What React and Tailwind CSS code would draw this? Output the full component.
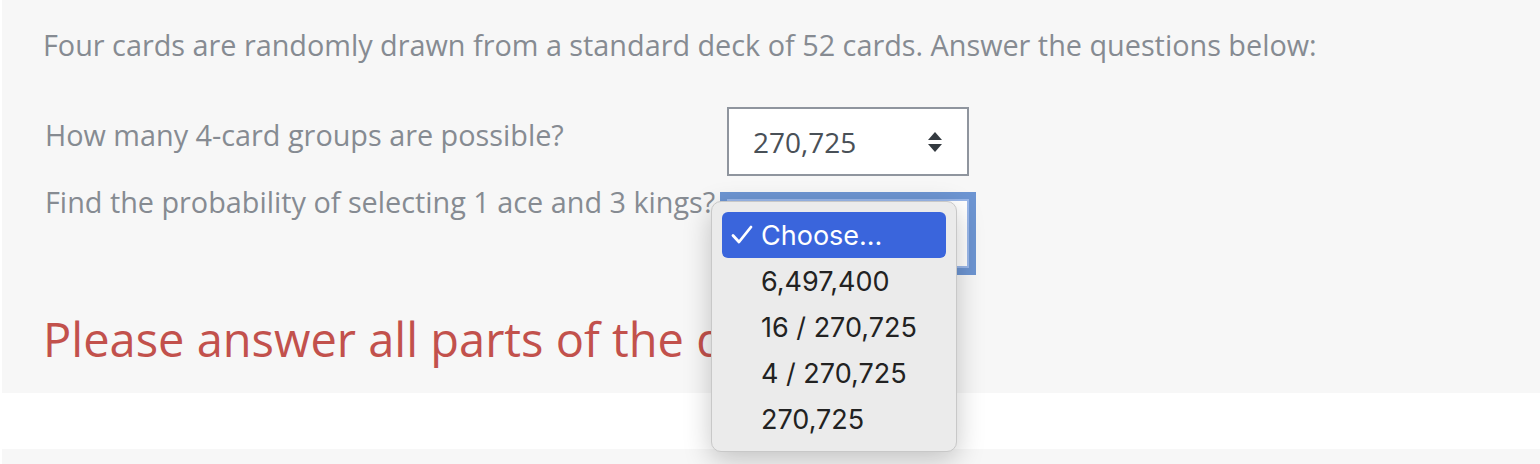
import React from "react";

const options = ["6,497,400", "16 / 270,725", "4 / 270,725", "270,725"];

const SortArrows = () => (
  <svg width="16" height="22" viewBox="0 0 16 22" className="text-[#343a40]">
    <path d="M8 1 L15 9 L1 9 Z" fill="currentColor" />
    <path d="M1 13 L15 13 L8 21 Z" fill="currentColor" />
  </svg>
);

const Check = () => (
  <svg width="22" height="20" viewBox="0 0 22 20" className="shrink-0">
    <path d="M2 10.5 L8 17 L20 2" fill="none" stroke="white" strokeWidth="2.8" strokeLinecap="round" strokeLinejoin="round" />
  </svg>
);

const App = () => {
  return (
    <div className="w-[1540px] h-[464px] bg-white overflow-hidden font-['Open_Sans',sans-serif]">
      {/* Question panel */}
      <div className="relative ml-[2px] h-[393px] bg-[#f7f7f7] pl-[41px]">
        <p className="pt-[24px] text-[28.8px] leading-[42px] text-[#868b92]">
          Four cards are randomly drawn from a standard deck of 52 cards. Answer the questions below:
        </p>

        {/* Row 1 */}
        <div className="mt-[41px] flex items-start">
          <div className="w-[684px] pl-[2px] pt-[7px] text-[28.8px] leading-[42px] text-[#868b92]">
            How many 4-card groups are possible?
          </div>
          <div className="w-[242px] h-[69px] border-2 border-[#8f959e] bg-white flex items-center justify-between pl-[24px] pr-[24px]">
            <span className="text-[28px] text-[#495057]">270,725</span>
            <SortArrows />
          </div>
        </div>

        {/* Row 2 */}
        <div className="mt-[23px] flex items-start">
          <div className="w-[684px] pl-[2px] -mt-[18px] h-[42px] whitespace-nowrap text-[28.8px] leading-[42px] text-[#868b92]">
            Find the probability of selecting 1 ace and 3 kings?
          </div>
          <div className="w-[242px] h-[69px] border-2 border-[#9bb8ea] bg-white shadow-[0_0_0_7px_#6d95d2]" />
        </div>

        <p className="mt-[43px] text-[47px] leading-[56px] text-[#c2514c] whitespace-nowrap">
          Please answer all parts of the question.
        </p>

        {/* Open dropdown menu */}
        <div className="absolute left-[709px] top-[201px] w-[246px] h-[251px] rounded-[10px] bg-[#ebebeb] border border-[#c8c8c8] shadow-[0_8px_28px_rgba(0,0,0,0.22)] px-[10px] pt-[10px] font-['Inter',sans-serif] text-[27px] leading-none">
          <div className="h-[46px] rounded-[6px] bg-[#3a65dc] flex items-center pl-[9px] gap-[8px] text-white">
            <Check />
            <span>Choose...</span>
          </div>
          {options.map((o) => (
            <div key={o} className="h-[46px] flex items-center pl-[39px] text-[#222222]">
              {o}
            </div>
          ))}
        </div>
      </div>

      <div className="h-[56px] bg-white" />
      <div className="ml-[2px] h-[15px] bg-[#f7f7f7]" />
    </div>
  );
};

export default App;
